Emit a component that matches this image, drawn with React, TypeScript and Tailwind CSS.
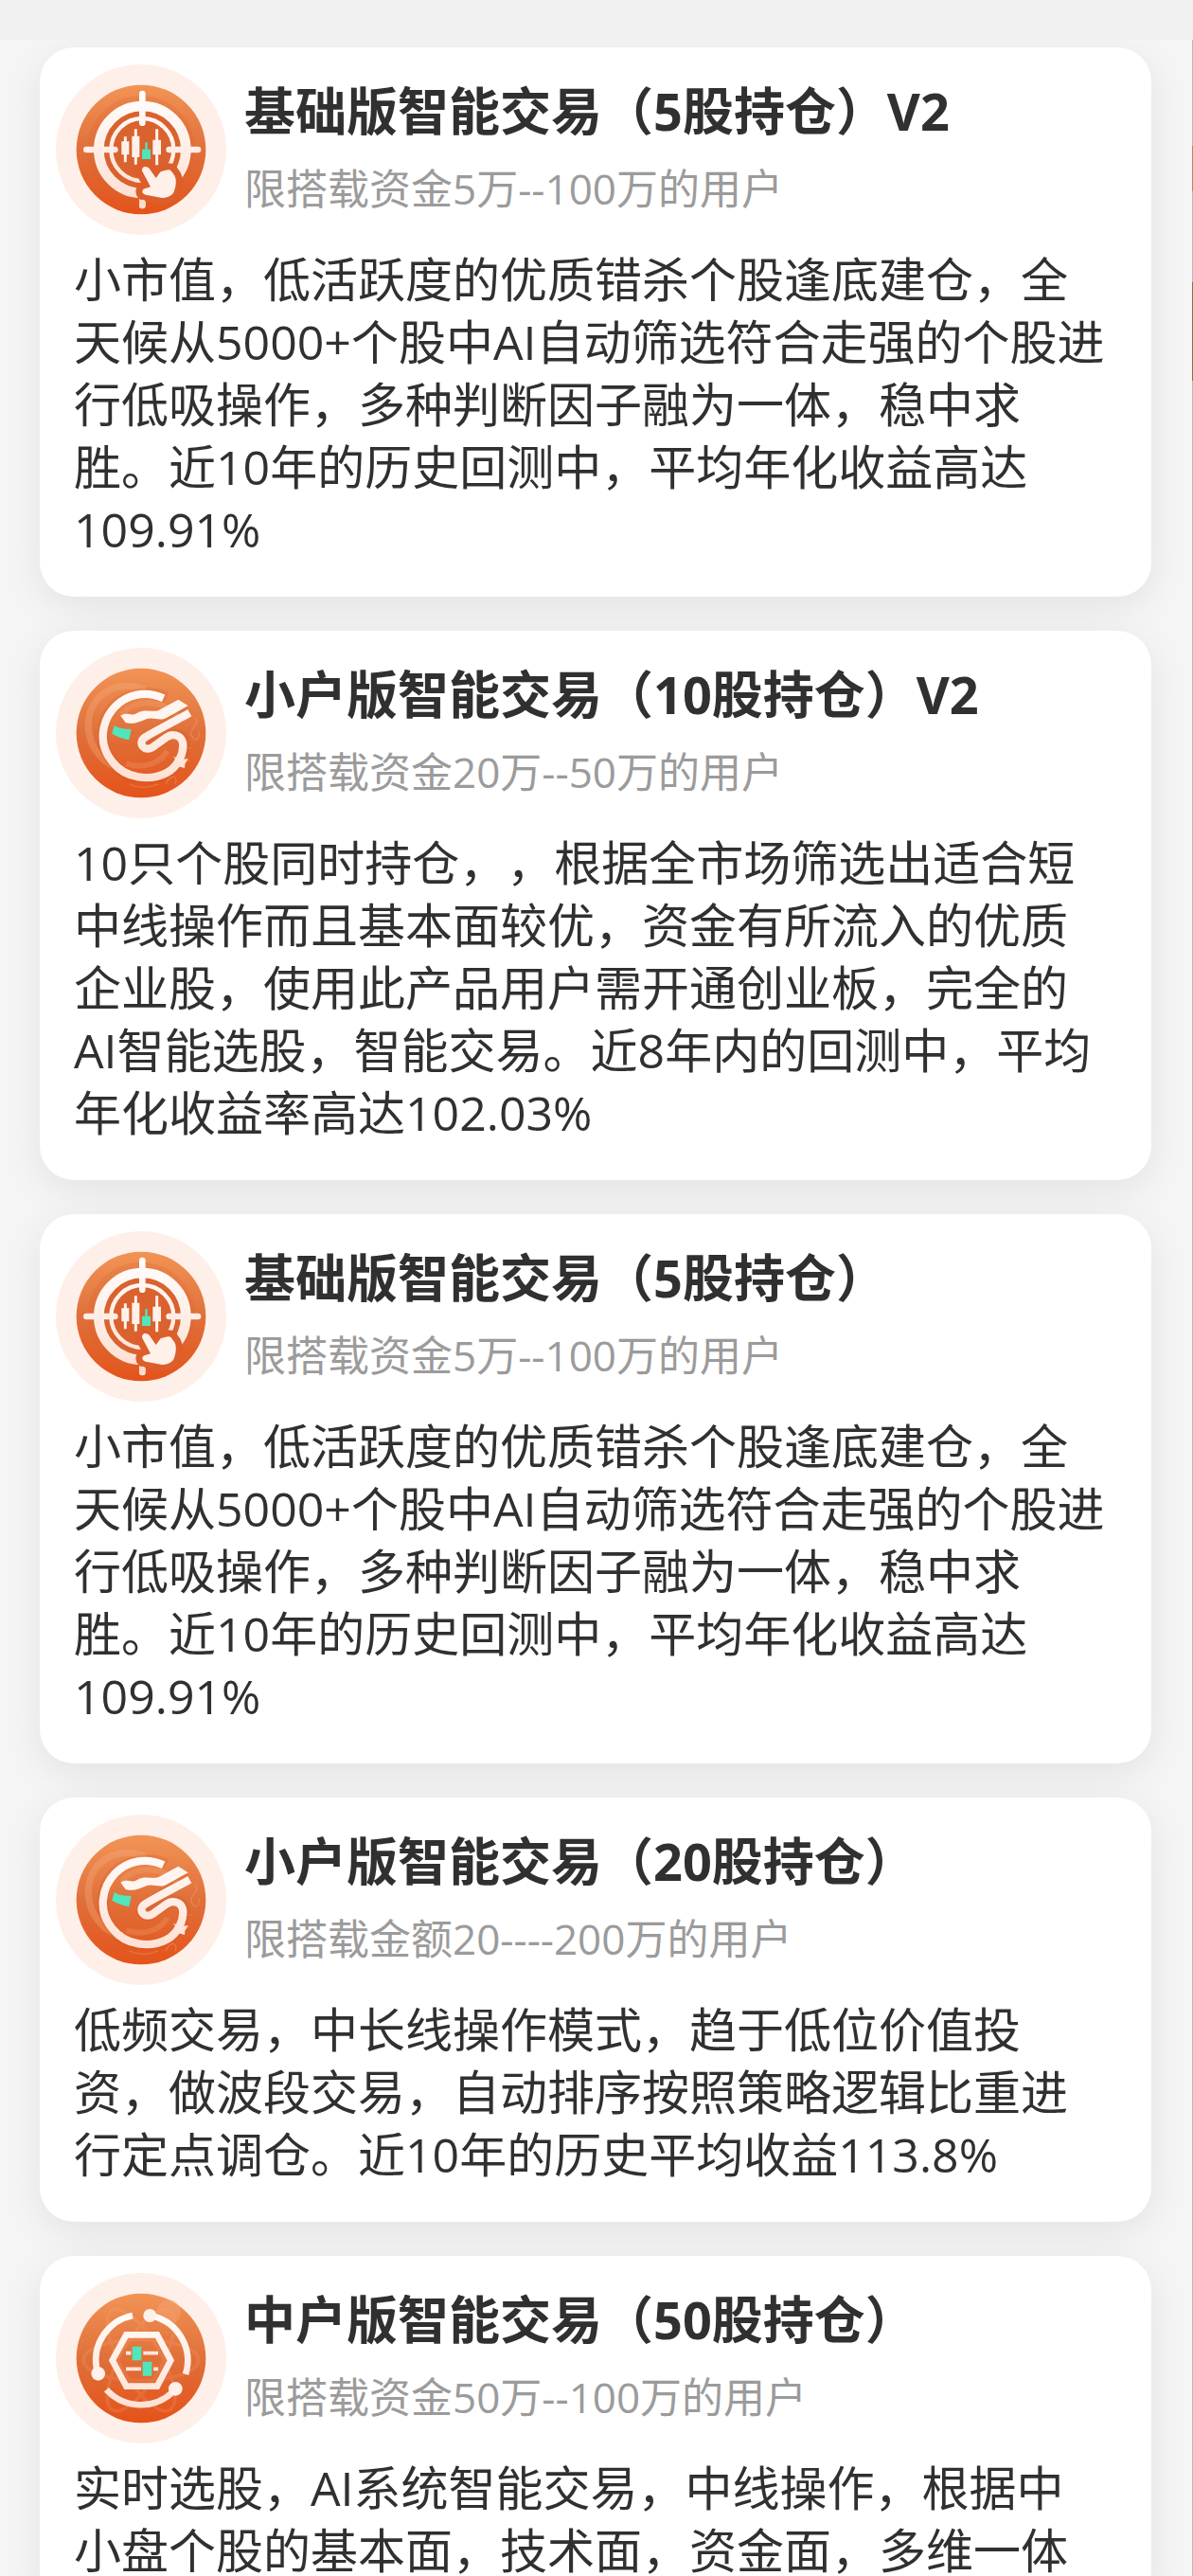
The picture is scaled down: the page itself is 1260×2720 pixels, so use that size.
import React from 'react';

type IconName = 'target' | 'dragon' | 'hexagon';

interface Strategy {
  id: number;
  icon: IconName;
  title: string;
  limit: string;
  description: string;
}

const strategies: Strategy[] = [
  {
    id: 1,
    icon: 'target',
    title: '基础版智能交易（5股持仓）V2',
    limit: '限搭载资金5万--100万的用户',
    description:
      '小市值，低活跃度的优质错杀个股逢底建仓，全天候从5000+个股中AI自动筛选符合走强的个股进行低吸操作，多种判断因子融为一体，稳中求胜。近10年的历史回测中，平均年化收益高达109.91%',
  },
  {
    id: 2,
    icon: 'dragon',
    title: '小户版智能交易（10股持仓）V2',
    limit: '限搭载资金20万--50万的用户',
    description:
      '10只个股同时持仓，，根据全市场筛选出适合短中线操作而且基本面较优，资金有所流入的优质企业股，使用此产品用户需开通创业板，完全的AI智能选股，智能交易。近8年内的回测中，平均年化收益率高达102.03%',
  },
  {
    id: 3,
    icon: 'target',
    title: '基础版智能交易（5股持仓）',
    limit: '限搭载资金5万--100万的用户',
    description:
      '小市值，低活跃度的优质错杀个股逢底建仓，全天候从5000+个股中AI自动筛选符合走强的个股进行低吸操作，多种判断因子融为一体，稳中求胜。近10年的历史回测中，平均年化收益高达109.91%',
  },
  {
    id: 4,
    icon: 'dragon',
    title: '小户版智能交易（20股持仓）',
    limit: '限搭载金额20----200万的用户',
    description:
      '低频交易，中长线操作模式，趋于低位价值投资，做波段交易，自动排序按照策略逻辑比重进行定点调仓。近10年的历史平均收益113.8%',
  },
  {
    id: 5,
    icon: 'hexagon',
    title: '中户版智能交易（50股持仓）',
    limit: '限搭载资金50万--100万的用户',
    description: '实时选股，AI系统智能交易，中线操作，根据中小盘个股的基本面，技术面，资金面，多维一体',
  },
];

// Shared gradients, referenced by every badge
const IconDefs: React.FC = () => (
  <svg className="absolute h-0 w-0" aria-hidden="true">
    <defs>
      <linearGradient id="disc" x1="0" y1="0" x2="0" y2="1">
        <stop offset="0" stopColor="#f29456" />
        <stop offset="0.5" stopColor="#e0703a" />
        <stop offset="1" stopColor="#e4531a" />
      </linearGradient>
      <linearGradient id="ink" gradientUnits="userSpaceOnUse" x1="0" y1="100" x2="0" y2="490">
        <stop offset="0" stopColor="#ffffff" />
        <stop offset="1" stopColor="#fddccd" />
      </linearGradient>
    </defs>
  </svg>
);

const TargetIcon: React.FC = () => (
  <svg viewBox="27 23 540 540" className="h-full w-full" fill="none" aria-hidden="true">
    <circle cx="297" cy="293" r="205" fill="url(#disc)" />
    <circle cx="297" cy="293" r="171" fill="#d96430" opacity="0.25" />
    <circle cx="301" cy="293" r="122" fill="#d9622e" />
    <circle cx="301" cy="293" r="138" stroke="url(#ink)" strokeWidth="32" />
    <circle cx="301" cy="293" r="99" stroke="url(#ink)" strokeWidth="13" />
    <path
      d="M301 116V208M301 440V470M124 293H214M386 293H477"
      stroke="url(#ink)"
      strokeWidth="20"
      strokeLinecap="round"
    />
    <path d="M247 252V333M280 228V340M347 228V342" stroke="#fff1ea" strokeWidth="9" />
    <path d="M235 267h24v42h-24zM268 250h24v67h-24zM334 262h26v47h-26z" fill="#fff1ea" />
    <path d="M310 270h7v22h10v31h-27v-31h10z" fill="#51e5bb" />
    <path
      d="M301 362c-6-15 15-22 24-7l19 28 15-20c15-4 27-10 34-2l10 14c8 14 4 37-2 52-5 13-29 21-41 18l-49-9c-13-3-13-18-1-20l17-5z"
      fill="#dc5e2a"
      stroke="#dc5e2a"
      strokeWidth="42"
      strokeLinejoin="round"
    />
    <path d="M301 461V470" stroke="#fddccd" strokeWidth="20" strokeLinecap="round" />
    <path
      d="M301 362c-6-15 15-22 24-7l19 28 15-20c15-4 27-10 34-2l10 14c8 14 4 37-2 52-5 13-29 21-41 18l-49-9c-13-3-13-18-1-20l17-5z"
      fill="#fff0e9"
    />
  </svg>
);

const DragonIcon: React.FC = () => (
  <svg viewBox="27 23 540 540" className="h-full w-full" fill="none" aria-hidden="true">
    <circle cx="297" cy="293" r="205" fill="url(#disc)" />
    <path d="M310 155C210 120 128 180 130 272c2 70 50 125 110 135" stroke="#f7ab80" strokeWidth="22" opacity="0.35" />
    <path d="M235 235c50-60 150-40 180 10M250 390c60 20 110-5 130-40" stroke="#f7ab80" strokeWidth="18" opacity="0.25" />
    <path
      d="M470 245c15 25-25 35-12 58s25 5 22-14M455 340c-30 0-28 34-5 40M375 455c20-40 40-20 30 0M260 455q45 20 90 0"
      stroke="#f7ab80"
      strokeWidth="4"
      opacity="0.35"
    />
    <path
      d="M378 180C330 155 255 165 212 205C165 253 163 338 209 390C255 445 340 450 392 412C425 388 442 345 433 316C425 292 397 292 379 305L324 341C306 350 291 326 306 312L450 221"
      stroke="#c94d1d"
      strokeWidth="34"
      opacity="0.18"
    />
    <path
      d="M368 183C311 157 254 171 216 208C170 256 160 330 206 384C249 439 326 446 378 419C414 400 434 356 429 323C423 297 394 294 377 307L335 337C308 355 286 327 306 309C327 294 409 253 451 229"
      stroke="url(#ink)"
      strokeWidth="25"
      strokeLinejoin="round"
    />
    <path d="M400 367l20 10 26-2-10 16-1 13-19-5z" fill="#ffe5da" />
    <path
      d="M232 238c21-14 32 4 52-8 27-17 54 1 73-11l58-32 31 20-69 38c-22 12-39-5-67 5-22 8-34 17-62 10z"
      fill="#fff5f0"
    />
    <path d="M205 295l7-26c15 10 35 11 54 12l-7 34c-19-4-40-11-54-20z" fill="#51e5bb" />
  </svg>
);

const HexagonIcon: React.FC = () => (
  <svg viewBox="27 17 540 540" className="h-full w-full" fill="none" aria-hidden="true">
    <circle cx="297" cy="287" r="205" fill="url(#disc)" />
    <g stroke="#f7ab80" strokeWidth="10" opacity="0.18">
      <ellipse cx="297" cy="293" rx="182" ry="65" />
      <ellipse cx="297" cy="293" rx="182" ry="65" transform="rotate(60 297 293)" />
      <ellipse cx="297" cy="293" rx="182" ry="65" transform="rotate(120 297 293)" />
    </g>
    <circle cx="385" cy="140" r="38" fill="#f7a878" opacity="0.4" />
    <g stroke="url(#ink)" strokeWidth="20">
      <path d="M270 152A145 145 0 0 0 156 320" />
      <path d="M335 154A145 145 0 0 1 438 338" />
      <path d="M187 387A148 148 0 0 0 398 394" />
    </g>
    <g fill="#fff0e9">
      <circle cx="325" cy="152" r="21" />
      <circle cx="161" cy="336" r="22" />
      <circle cx="406" cy="384" r="22" />
    </g>
    <path d="M250 213H348L391 294L348 376H250L206 294Z" stroke="url(#ink)" strokeWidth="20" />
    <path d="M249 271H265M304 271H351M249 321H297M336 321H351" stroke="#ffe6db" strokeWidth="11" />
    <path d="M269 250h29v44h-29zM302 298h29v45h-29z" fill="#51e5bb" />
  </svg>
);

const icons: Record<IconName, React.FC> = {
  target: TargetIcon,
  dragon: DragonIcon,
  hexagon: HexagonIcon,
};

const StrategyCard: React.FC<{ strategy: Strategy }> = ({ strategy }) => {
  const Icon = icons[strategy.icon];

  return (
    <article className="rounded-[36px] bg-white pb-[38px] shadow-[0_10px_40px_rgba(0,0,0,0.08)]">
      <div className="flex items-center gap-[19px] pt-[18px] pl-[17px]">
        <div className="h-[180px] w-[180px] shrink-0 overflow-hidden rounded-full bg-[#feefe8]">
          <Icon />
        </div>
        <div className="min-w-0">
          <h2 className="text-[54px] leading-[82px] font-bold">{strategy.title}</h2>
          <p className="text-[44px] leading-[82px] text-[#9b9b9b]">{strategy.limit}</p>
        </div>
      </div>
      <p className="mt-[14px] pr-12 pl-9 text-[50px] leading-[66px]">{strategy.description}</p>
    </article>
  );
};

// Edge of the neighbouring panel, peeking in on the right
const NextPanelEdge: React.FC = () => (
  <div className="flex w-px shrink-0 flex-col bg-[#b8b8b8] pt-28" aria-hidden="true">
    <div className="h-12 bg-[#b98a4a]" />
    <div className="mt-24 h-[104px] bg-[#8f6d3c]" />
  </div>
);

export default function App() {
  return (
    <div className="flex h-screen flex-col overflow-hidden bg-[#f5f5f5] font-['Open_Sans','Noto_Sans_CJK_SC',sans-serif] text-[#303030] [text-spacing-trim:space-all]">
      <IconDefs />
      <div className="h-[42px] shrink-0 bg-[#f0f0f0]" />
      <div className="flex min-h-0 flex-1">
        <main className="min-w-0 flex-1 overflow-y-auto pt-2 pr-[43px] pl-[42px] [scrollbar-width:none]">
          <div className="flex flex-col gap-9">
            {strategies.map((strategy) => (
              <StrategyCard key={strategy.id} strategy={strategy} />
            ))}
          </div>
        </main>
        <NextPanelEdge />
      </div>
    </div>
  );
}
